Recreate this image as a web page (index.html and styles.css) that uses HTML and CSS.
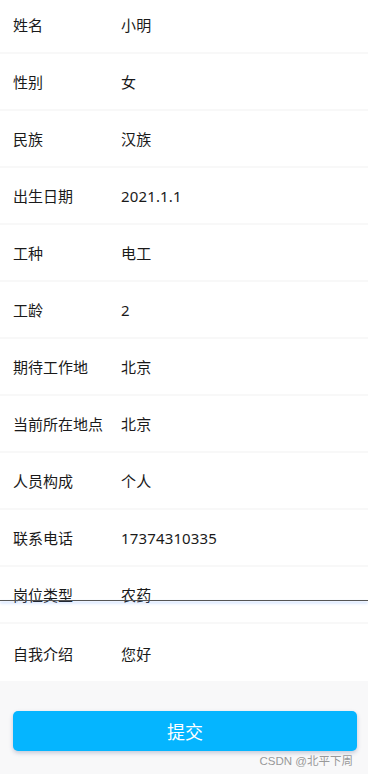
FILE: index.html
```html
<!DOCTYPE html>
<html lang="zh-CN">
<head>
    <meta charset="UTF-8">
    <meta name="viewport" content="width=device-width, initial-scale=1.0">
    <title>个人信息</title>
    <link rel="stylesheet" href="styles.css">
</head>
<body>
    <div class="info-list">
        <div class="info-row"><span class="label">姓名</span><span class="value">小明</span></div>
        <div class="info-row"><span class="label">性别</span><span class="value">女</span></div>
        <div class="info-row"><span class="label">民族</span><span class="value">汉族</span></div>
        <div class="info-row"><span class="label">出生日期</span><span class="value">2021.1.1</span></div>
        <div class="info-row"><span class="label">工种</span><span class="value">电工</span></div>
        <div class="info-row"><span class="label">工龄</span><span class="value">2</span></div>
        <div class="info-row"><span class="label">期待工作地</span><span class="value">北京</span></div>
        <div class="info-row"><span class="label">当前所在地点</span><span class="value">北京</span></div>
        <div class="info-row"><span class="label">人员构成</span><span class="value">个人</span></div>
        <div class="info-row"><span class="label">联系电话</span><span class="value">17374310335</span></div>
        <div class="info-row"><span class="label">岗位类型</span><span class="value">农药</span></div>
        <div class="info-row last"><span class="label">自我介绍</span><span class="value">您好</span></div>
    </div>

    <div class="footer">
        <button class="submit-btn" type="button">提交</button>
        <div class="watermark">CSDN @北平下周</div>
    </div>

    <div class="scroll-line"></div>
</body>
</html>
```

FILE: styles.css
```css
body {
    margin: 0;
    padding: 0;
    background-color: #f8f8f9;
    font-family: "Noto Sans", "Noto Sans CJK SC", sans-serif;
    font-size: 15px;
    color: #1a1a1a;
    position: relative;
    height: 774px;
    overflow: hidden;
}

.info-list {
    margin-top: -3px;
    display: flex;
    flex-direction: column;
    gap: 2px;
    background-color: #f8f8f8;
}

.info-row {
    display: flex;
    align-items: center;
    height: 55px;
    padding: 0 13px;
    background-color: #fff;
}

.info-row.last {
    height: 57px;
    padding-top: 1px;
    box-sizing: border-box;
}

.label {
    width: 108px;
    flex-shrink: 0;
}

.value {
    letter-spacing: 0.15px;
}

.footer {
    padding: 30px 11px 0 13px;
    position: relative;
}

.submit-btn {
    display: block;
    width: 100%;
    height: 40px;
    border: none;
    border-radius: 5px;
    background-color: #05b5ff;
    color: #fff;
    font-family: "Noto Sans CJK SC", sans-serif;
    font-size: 18px;
    box-shadow: 0 2px 4px rgba(40, 60, 120, 0.25);
}

.watermark {
    text-align: right;
    margin-top: 1px;
    padding-right: 4px;
    font-family: "Liberation Sans", "Noto Sans CJK SC", sans-serif;
    font-size: 11.5px;
    color: #999;
}

.scroll-line {
    position: absolute;
    left: 0;
    right: 0;
    top: 600px;
    height: 1px;
    background-color: #555;
    box-shadow: 0 2px 3px rgba(90, 150, 255, 0.55);
}
```
